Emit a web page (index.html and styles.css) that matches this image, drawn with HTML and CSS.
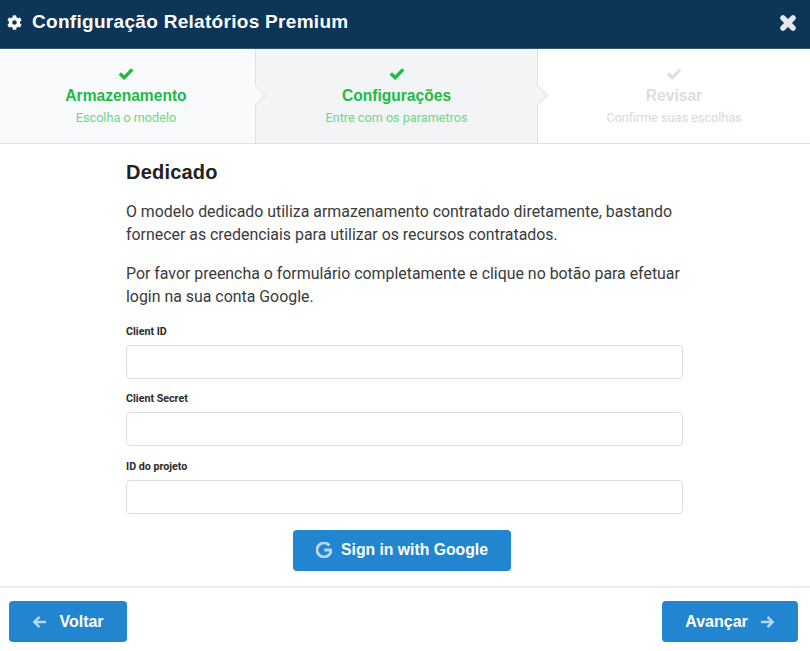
FILE: index.html
```html
<!DOCTYPE html>
<html lang="pt">
<head>
<meta charset="utf-8">
<title>Configuração Relatórios Premium</title>
<link rel="stylesheet" href="styles.css">
</head>
<body>
<div class="modal">
  <header class="header">
    <h1 class="title">
      <svg class="gear" viewBox="0 0 512 512"><path fill="#fff" fill-rule="evenodd" d="M487 316l-42-25a194 194 0 0 0 0-70l42-25c5-3 7-9 6-14-11-36-30-68-55-95-4-4-10-5-15-2l-42 24a190 190 0 0 0-61-35V26c0-6-4-10-9-12a246 246 0 0 0-110 0c-5 2-9 6-9 12v48a196 196 0 0 0-61 35L89 85c-5-3-11-2-15 2-25 27-44 59-55 95-2 5 1 11 6 14l42 25a194 194 0 0 0 0 70l-42 25c-5 3-7 9-6 14 11 36 30 68 55 95 4 4 10 5 15 2l42-24a190 190 0 0 0 61 35v48c0 6 4 10 9 12 37 8 75 8 110 0 5-2 9-6 9-12v-48a196 196 0 0 0 61-35l42 24c5 3 11 2 15-2 25-27 44-59 55-95 2-5-1-11-6-14zM256 336a80 80 0 1 1 0-160 80 80 0 0 1 0 160z"/></svg>
      Configuração Relatórios Premium
    </h1>
    <svg class="close" viewBox="0 0 18 18"><path d="M4 4l10 10M14 4L4 14" stroke="#e4e8ec" stroke-width="5.500" stroke-linecap="round" fill="none"/></svg>
  </header>

  <nav class="steps">
    <div class="step step-done">
      <svg class="check" viewBox="0 0 16 13"><path d="M1.8 6.5l4.4 4.2 8-8.4" fill="none" stroke="currentColor" stroke-width="3.4"/></svg>
      <div class="step-title">Armazenamento</div>
      <div class="step-sub">Escolha o modelo</div>
      <span class="arrow arrow-first"></span>
    </div>
    <div class="step step-done step-active">
      <svg class="check" viewBox="0 0 16 13"><path d="M1.8 6.5l4.4 4.2 8-8.4" fill="none" stroke="currentColor" stroke-width="3.4"/></svg>
      <div class="step-title">Configurações</div>
      <div class="step-sub">Entre com os parametros</div>
      <span class="arrow arrow-active"></span>
    </div>
    <div class="step step-off">
      <svg class="check" viewBox="0 0 16 13"><path d="M1.8 6.5l4.4 4.2 8-8.4" fill="none" stroke="currentColor" stroke-width="3.4"/></svg>
      <div class="step-title">Revisar</div>
      <div class="step-sub">Confirme suas escolhas</div>
    </div>
  </nav>

  <main class="content">
    <h2 class="heading">Dedicado</h2>
    <p class="para">O modelo dedicado utiliza armazenamento contratado diretamente, bastando fornecer as credenciais para utilizar os recursos contratados.</p>
    <p class="para">Por favor preencha o formulário completamente e clique no botão para efetuar login na sua conta Google.</p>
    <form class="form">
      <label class="field"><span class="label">Client ID</span><input class="input" type="text"></label>
      <label class="field"><span class="label">Client Secret</span><input class="input" type="text"></label>
      <label class="field"><span class="label">ID do projeto</span><input class="input" type="text"></label>
      <button class="btn btn-google" type="button">
        <svg class="g" viewBox="0 0 16 16"><path d="M13.4 3.500A7 7 0 1 0 15 8H8.200" fill="none" stroke="#b9d8f2" stroke-width="2.800"/></svg>
        Sign in with Google
      </button>
    </form>
  </main>

  <footer class="footer">
    <button class="btn btn-back" type="button">
      <svg class="ar" viewBox="0 0 16 14"><path d="M15 7H2.500M8 1.500L2.500 7 8 12.500" fill="none" stroke="#b9d8f2" stroke-width="2.600"/></svg>
      Voltar
    </button>
    <button class="btn btn-next" type="button">
      Avançar
      <svg class="ar" viewBox="0 0 16 14"><path d="M1 7h12.500M8 1.500L13.500 7 8 12.500" fill="none" stroke="#b9d8f2" stroke-width="2.600"/></svg>
    </button>
  </footer>
</div>
</body>
</html>
```

FILE: styles.css
```css
* { box-sizing: border-box; }
html, body { margin: 0; padding: 0; background: #fff; }
body { font-family: Roboto, "Liberation Sans", sans-serif; color: #333; }
.modal { width: 810px; height: 651px; display: flex; flex-direction: column; overflow: hidden; }

.header { height: 49px; flex: none; background: #0c3558; display: flex; align-items: center; justify-content: space-between; padding: 0 13px 4px 7px; border-bottom: 1px solid #2f5574; }
.title { margin: 0; display: flex; align-items: center; gap: 10px; color: #fff; font-size: 19px; font-weight: 700; font-family: "Liberation Sans", sans-serif; letter-spacing: .3px; }
.gear { width: 15px; height: 15px; }
.close { width: 18px; height: 18px; margin-top: 2px; }

.steps { height: 95px; flex: none; display: flex; border-bottom: 1px solid #dfe1e3; }
.step { position: relative; display: flex; flex-direction: column; align-items: center; padding-top: 18px; border-right: 1px solid #dfe1e3; }
.step:nth-child(1) { width: 256px; padding-right: 3px; background: #f9fafb; }
.step:nth-child(2) { width: 282px; background: #f3f4f5; }
.step:nth-child(3) { flex: 1; background: #fff; border-right: 0; }
.check { width: 16px; height: 13px; display: block; }
.step-title { font-size: 15.600px; font-weight: 700; line-height: 20px; margin-top: 6px; font-family: "Liberation Sans", sans-serif; }
.step-sub { font-size: 12.650px; line-height: 16px; margin-top: 4px; }
.step-done { color: #21ba45; }
.step-done .step-sub { color: #6fd689; }
.step-off { color: #dfe0e1; }
.step-off .step-title { color: #dcdddd; }
.step-off .step-sub { color: #d8d9da; }
.arrow { position: absolute; z-index: 1; right: -8px; top: 39px; width: 15px; height: 15px; transform: rotate(45deg); border-top: 1px solid #dfe1e3; border-right: 1px solid #dfe1e3; }
.arrow-first { background: #f9fafb; }
.arrow-active { background: #f3f4f5; }

.content { flex: 1; width: 557px; margin-left: 126px; display: flex; flex-direction: column; }
.heading { margin: 16px 0 0; font-size: 20px; line-height: 24px; font-weight: 700; color: #222; font-family: "Liberation Sans", sans-serif; letter-spacing: .2px; }
.para { margin: 16px 0 0; font-size: 15.900px; line-height: 23px; color: #3a3a3a; }
.para + .para { margin-top: 16px; }
.form { display: flex; flex-direction: column; }
.field { display: flex; flex-direction: column; }
.form .field:first-child { margin-top: 16px; }
.field + .field { margin-top: 12.400px; }
.label { font-size: 10.700px; line-height: 16px; font-weight: 700; color: #2b2b2b; margin-bottom: 5px; }
.input { width: 557px; height: 34px; border: 1px solid #dededf; border-radius: 4px; background: #fff; outline: 0; padding: 0 10px; }

.btn { border: 0; border-radius: 4px; background: #2185d0; color: #fff; font-family: "Liberation Sans", sans-serif; font-size: 16px; font-weight: 700; display: flex; align-items: center; justify-content: center; height: 41px; padding: 0; }
.btn-google { width: 218px; margin: 16px 0 0 167px; gap: 9px; font-size: 15.750px; }
.g { width: 16px; height: 16px; }
.ar { width: 15px; height: 14px; }

.footer { height: 65px; flex: none; border-top: 2px solid #ececec; display: flex; align-items: flex-start; justify-content: space-between; padding: 13px 12px 0 9px; }
.btn-back { width: 118px; gap: 12px; }
.btn-next { width: 136px; gap: 12px; }
```
